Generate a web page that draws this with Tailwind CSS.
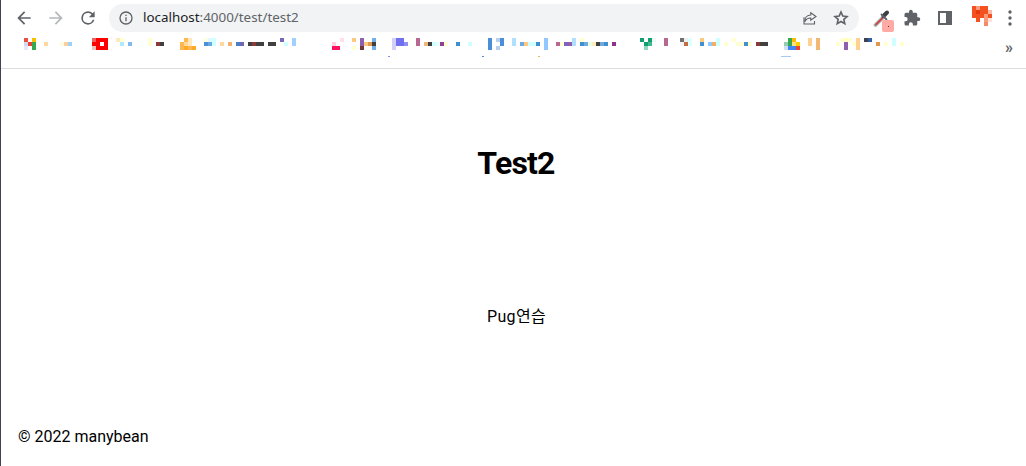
<!DOCTYPE html>
<html lang="en">
<head>
    <meta charset="UTF-8">
    <title>Test2</title>
    <script src="https://cdn.jsdelivr.net/npm/@tailwindcss/browser@4"></script>
</head>
<body class="bg-white text-black overflow-hidden font-['Roboto','Noto_Sans_CJK_KR',sans-serif]">
<div class="flex flex-col h-[466px] border-l border-[#3f3f55]">
    <!-- toolbar -->
    <header class="flex items-center h-[32px] mt-[2px] pl-[13px] shrink-0">
        <svg class="w-[20px] h-[20px] text-[#5f6368]" viewBox="0 0 24 24" fill="currentColor"><path d="M20 11H7.83l5.59-5.59L12 4l-8 8 8 8 1.41-1.41L7.83 13H20v-2z"/></svg>
        <svg class="w-[20px] h-[20px] ml-[12px] text-[#b5b7ba]" viewBox="0 0 24 24" fill="currentColor"><path d="M12 4l-1.41 1.41L16.17 11H4v2h12.17l-5.58 5.59L12 20l8-8z"/></svg>
        <svg class="w-[20px] h-[20px] ml-[12px] text-[#5f6368]" viewBox="0 0 24 24" fill="currentColor"><path d="M17.65 6.35A7.96 7.96 0 0 0 12 4a8 8 0 1 0 7.73 10h-2.08A6 6 0 1 1 12 6c1.66 0 3.14.69 4.22 1.78L13 11h7V4l-2.35 2.35z"/></svg>
        <div class="flex items-center w-[750px] h-[28px] ml-[11px] pl-[9px] pr-[9px] rounded-full bg-[#f1f3f4]">
            <svg class="w-[16px] h-[16px] text-[#5f6368]" viewBox="0 0 24 24" fill="currentColor"><path d="M11 7h2v2h-2zm0 4h2v6h-2zm1-9a10 10 0 1 0 0 20 10 10 0 0 0 0-20zm0 18a8 8 0 1 1 0-16 8 8 0 0 1 0 16z"/></svg>
            <span class="ml-[9px] text-[13.4px] leading-none text-[#5f6368] font-['Noto_Sans',sans-serif]"><span class="text-[#202124]">localhost</span>:4000/test/test2</span>
            <svg class="w-[18px] h-[18px] ml-auto text-[#5f6368]" viewBox="0 0 24 24" fill="none" stroke="currentColor" stroke-width="1.5"><path d="M4 11v9h14v-4"/><path d="M13 5l7 5-7 5v-3c-4 0-6 1-8 5 0-5 3-9 8-9z"/></svg>
            <svg class="w-[18px] h-[18px] ml-[13px] text-[#5f6368]" viewBox="0 0 24 24" fill="none" stroke="currentColor" stroke-width="2.2"><path d="M12 4l2.4 5.4 5.6.6-4.2 3.8 1.2 5.7-5-2.9-5 2.9 1.2-5.7L4 10l5.6-.6z"/></svg>
        </div>
        <div class="relative w-[20px] h-[20px] ml-[14px]">
            <svg class="w-[20px] h-[20px]" viewBox="0 0 20 20" fill="none" stroke-linecap="round"><path d="M2.5 17L9.5 10" stroke="#a4a7aa" stroke-width="3.6"/><path d="M3 16.5L9.5 10" stroke="#d93a35" stroke-width="1.6"/><path d="M10.5 8L14 4.5" stroke="#3c4043" stroke-width="4"/><path d="M8.5 6.5L13.5 11.5" stroke="#5f6368" stroke-width="1.8"/></svg>
            <span class="absolute left-[9px] top-[12px] w-[12px] h-[12px] rounded-[2px] bg-[#ffaaa5] flex items-center justify-center"><span class="w-[1px] h-[1px] bg-[#5f3030]"></span></span>
        </div>
        <svg class="w-[18px] h-[18px] ml-[10px] text-[#5f6368]" viewBox="0 0 24 24" fill="currentColor"><path d="M20.5 11H19V7a2 2 0 0 0-2-2h-4V3.5a2.5 2.5 0 0 0-5 0V5H4a2 2 0 0 0-2 2v3.8h1.5a2.7 2.7 0 0 1 0 5.4H2V20a2 2 0 0 0 2 2h3.8v-1.5a2.7 2.7 0 0 1 5.4 0V22H17a2 2 0 0 0 2-2v-4h1.5a2.5 2.5 0 0 0 0-5z"/></svg>
        <div class="flex justify-start w-[14px] h-[14px] ml-[17px] border-2 border-[#5f6368] bg-[#5f6368]"><span class="w-[6px] h-full bg-white"></span></div>
        <svg class="w-[20px] h-[20px] ml-[20px] mb-[4px]" viewBox="0 0 20 20" shape-rendering="crispEdges" id="avatar"></svg>
        <svg class="w-[4px] h-[16px] ml-[16px] text-[#5f6368]" viewBox="0 0 4 16" fill="currentColor"><circle cx="2" cy="2" r="1.7"/><circle cx="2" cy="8" r="1.7"/><circle cx="2" cy="14" r="1.7"/></svg>
    </header>
    <!-- bookmarks bar -->
    <nav class="relative h-[35px] border-b border-[#dadce0] shrink-0">
        <svg class="absolute left-[-1px] top-[-34px] w-[1000px] h-[68px]" viewBox="0 0 1000 68" shape-rendering="crispEdges" id="marks"></svg>
        <span class="absolute right-[13px] top-[6px] text-[16px] leading-none text-[#5f6368] font-bold">»</span>
    </nav>
    <!-- page -->
    <main class="flex flex-col flex-1 relative">
        <h1 class="mt-[75px] pl-[5px] text-center text-[32px] leading-[38px] font-bold tracking-[-0.8px]">Test2</h1>
        <p class="mt-[125px] pl-[6px] text-center text-[16px] leading-[20px] tracking-[0.3px]">Pug연습</p>
        <footer class="mt-auto mb-[19px] pl-[17px] text-[16px] leading-[20px]">© 2022 manybean</footer>
    </main>
</div>
<script>
    // x, y, colour of each 4px block in the blurred bookmark row
    const blocks = [
        [24,38,"#e8503f"],[32,38,"#fbbc04"],[24,42,"#cfd8f5"],[28,42,"#ea4335"],[32,42,"#34a853"],[24,46,"#e3e9fb"],[32,46,"#34a853"],
        [44,42,"#ffd8a0"],[60,42,"#fffce0"],[64,42,"#fbd0a0"],[68,42,"#9fd0f8"],
        [92,38,"#f06060"],[96,38,"#ff0000"],[100,38,"#ff0000"],[104,38,"#ff0000"],[92,42,"#ff0000"],[96,42,"#ff0000"],[100,42,"#ffffff"],[104,42,"#ff0000"],[92,46,"#f0c0c0"],[96,46,"#ff0000"],[100,46,"#ff0000"],[104,46,"#ff0000"],
        [116,38,"#ffe8c0"],[120,38,"#ffffd0"],[120,42,"#b0e8ff"],[128,42,"#80b8f0"],[148,38,"#ffffd0"],[148,42,"#ffffd0"],[156,42,"#8b3a3a"],[160,42,"#404040"],
        [184,38,"#ffb84d"],[188,38,"#ffe8c0"],[180,42,"#ffb84d"],[184,42,"#ffd8a0"],[188,42,"#ffe8c0"],[180,46,"#ffb84d"],[184,46,"#ffa726"],[188,46,"#ffb84d"],[192,46,"#ffa726"],
        [204,38,"#fffde0"],[208,38,"#e0f8ff"],[212,38,"#d0ffff"],[204,42,"#4a90d9"],[208,42,"#6aa8e0"],[212,42,"#d0ffff"],[220,42,"#ffd8a0"],[228,42,"#efb070"],[236,42,"#4a80c8"],[240,42,"#7068b0"],
        [248,42,"#404040"],[252,42,"#8b3a3a"],[256,42,"#404040"],[260,42,"#404040"],[268,42,"#404040"],[272,42,"#404040"],[280,38,"#7468b8"],[284,42,"#d0ffff"],[292,38,"#a0d0ff"],[292,42,"#a0d0ff"],
        [332,42,"#ffd0e0"],[332,46,"#ff1060"],[336,46,"#ff1060"],[340,38,"#ffe0ea"],
        [352,38,"#ffc880"],[352,46,"#ffffd0"],[360,38,"#9060b0"],[360,42,"#9060b0"],[360,46,"#703838"],[364,42,"#ffc880"],[368,42,"#e09850"],[372,42,"#404040"],[372,38,"#70b0e8"],[372,46,"#70b0e8"],
        [392,38,"#d0d0f8"],[392,42,"#d0d0f8"],[392,46,"#d0d0f8"],[396,38,"#7070f0"],[400,38,"#7070f0"],[396,42,"#7070f0"],[400,42,"#7070f0"],[404,42,"#9090f0"],
        [416,38,"#b86890"],[416,42,"#b86890"],[424,42,"#f0b878"],[428,42,"#404040"],[432,42,"#d0ffff"],[436,42,"#e8ffff"],[440,42,"#904090"],[444,42,"#ffffd0"],[456,42,"#4090d0"],[468,42,"#d0ffff"],
        [488,38,"#4a90d9"],[488,42,"#4a90d9"],[488,46,"#4a90d9"],[496,38,"#b8d0f0"],[500,38,"#4a90d9"],[500,42,"#4a90d9"],[496,46,"#b8d0f0"],
        [512,38,"#b0e0ff"],[512,42,"#b0e0ff"],[520,42,"#70a8e0"],[524,42,"#ffc880"],[528,42,"#d0ffff"],[532,42,"#d0ffff"],[536,42,"#4090d0"],[544,38,"#90c8ff"],[544,42,"#90c8ff"],[544,46,"#90c8ff"],
        [556,42,"#b86890"],[560,42,"#ffffd0"],[564,42,"#8060c0"],[568,42,"#9060b0"],[572,38,"#b0e0ff"],[572,42,"#b0e0ff"],[580,38,"#ffffd0"],[580,42,"#4090d0"],[584,42,"#70a8e0"],[588,42,"#e8ffe0"],[592,42,"#ffedc0"],[596,42,"#404040"],[600,42,"#70a8e0"],[604,42,"#4090d0"],[612,42,"#903090"],
        [640,38,"#10a070"],[648,38,"#10a070"],[644,42,"#10a070"],[648,42,"#40b890"],[644,46,"#90d8c0"],[652,38,"#effaf5"],[664,38,"#b86890"],[664,42,"#b86890"],
        [680,38,"#707070"],[684,38,"#f0f0f0"],[680,42,"#f5f5f5"],[684,42,"#c07040"],[688,38,"#e0ffff"],[688,42,"#e0ffff"],[700,38,"#ffc880"],[700,42,"#4090d0"],[708,42,"#90c8ff"],[712,42,"#f0b060"],[716,38,"#d0ffff"],[716,42,"#d0ffff"],
        [724,42,"#ffffd0"],[732,38,"#ffffd0"],[736,42,"#ffffd0"],[740,42,"#ffffd0"],[744,42,"#4090d0"],[748,42,"#ffffd0"],[756,42,"#8b3a3a"],[760,42,"#404040"],[764,42,"#404040"],
        [784,42,"#90d0b0"],[788,38,"#34a853"],[788,42,"#34a853"],[792,38,"#fbbc04"],[792,42,"#ffe080"],[796,42,"#fbd000"],[784,46,"#cfe0f5"],[788,46,"#4285f4"],[792,46,"#4285f4"],[796,46,"#ea4335"],
        [808,38,"#ffd090"],[808,42,"#ffd090"],[816,38,"#f0b870"],[816,42,"#f0b870"],[816,46,"#f0b870"],[836,42,"#ffffd0"],[840,38,"#ffffd0"],[844,38,"#ffffc0"],[844,42,"#9060b0"],[844,46,"#9060b0"],[848,38,"#ffffd0"],[852,42,"#ffffd0"],[856,38,"#ffd090"],[856,42,"#ffd090"],[856,46,"#ffd090"],
        [864,38,"#404050"],[868,38,"#3060a8"],[876,42,"#e09850"],[884,42,"#ffffd0"],[892,38,"#d0ffff"],[892,42,"#d0ffff"],[900,42,"#ffffd0"]
    ];
    const specks = [[388,"#8090f0",2],[482,"#4a90d9",2],[538,"#f0b060",2],[781,"#a8c8f8",10]];
    let out = "";
    for (const [x, y, c] of blocks) out += `<rect x="${x}" y="${y}" width="4" height="4" fill="${c}"/>`;
    for (const [x, c, w] of specks) out += `<rect x="${x}" y="56" width="${w}" height="1" fill="${c}"/>`;
    document.getElementById("marks").innerHTML = out;

    const avatar = [
        [0,0,"#f4511e"],[4,0,"#fa9a78"],[8,0,"#f4511e"],[12,0,"#f4511e"],
        [0,4,"#f4511e"],[4,4,"#e53a0c"],[8,4,"#f4511e"],[12,4,"#f4511e"],[16,4,"#fbb9a2"],
        [0,8,"#f4511e"],[4,8,"#f4511e"],[8,8,"#f4511e"],[12,8,"#fa9a78"],[16,8,"#f4511e"],
        [4,12,"#f4511e"],[12,12,"#fa9a78"],[16,12,"#fde2d8"],
        [12,16,"#f78a64"]
    ];
    document.getElementById("avatar").innerHTML = avatar.map(([x, y, c]) => `<rect x="${x}" y="${y}" width="4" height="4" fill="${c}"/>`).join("");
</script>
</body>
</html>
